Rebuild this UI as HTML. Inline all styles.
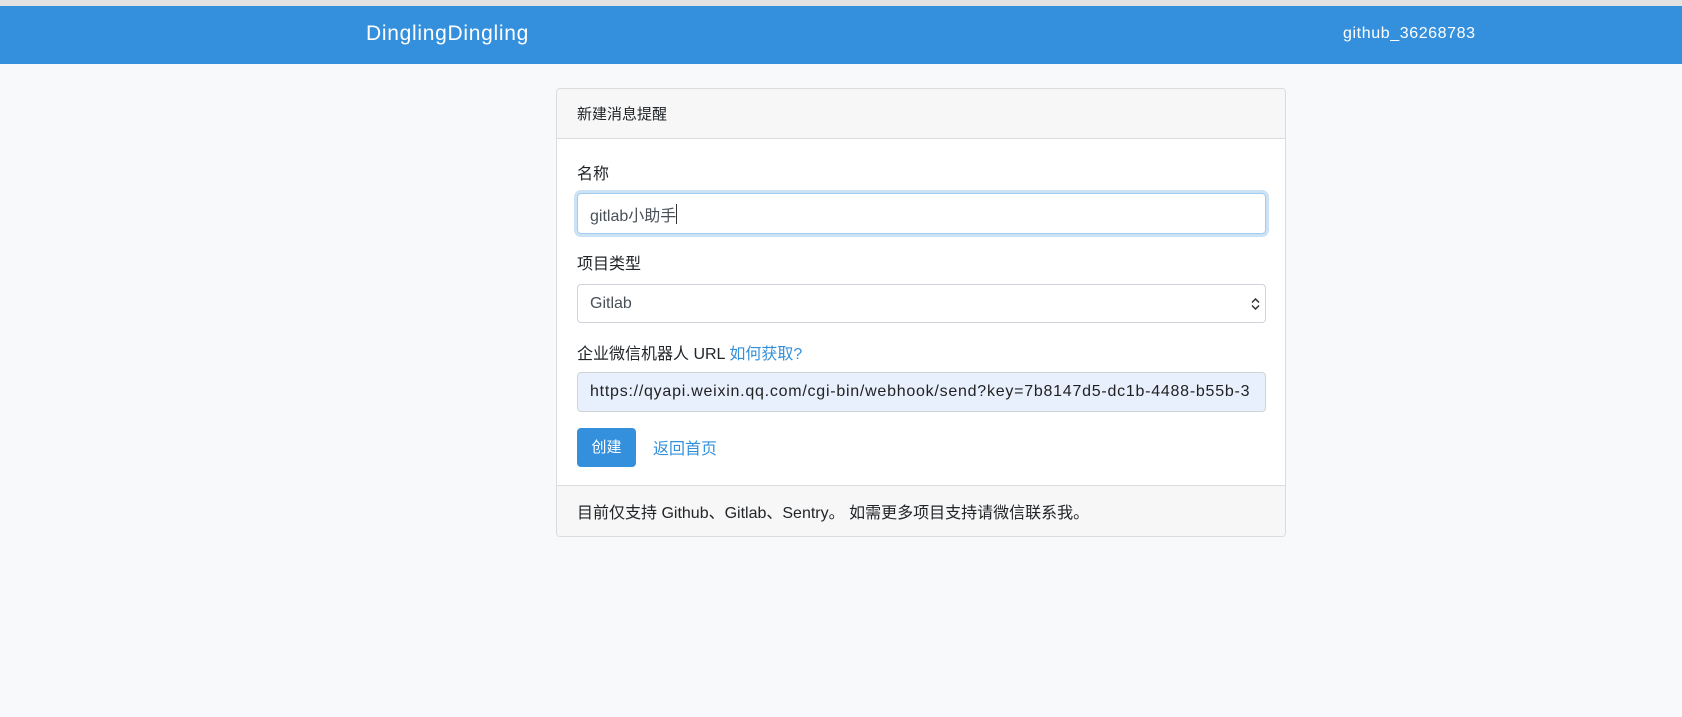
<!DOCTYPE html>
<html><head><meta charset="utf-8"><style>
*{box-sizing:border-box;margin:0;padding:0}
body{width:1682px;height:717px;background:#f8f9fa;font-family:"Liberation Sans","Noto Sans CJK SC",sans-serif;font-size:16px;color:#212529;position:relative;overflow:hidden}
.top{position:absolute;left:0;top:0;width:1682px;height:6px;background:#e2e2e2}
.nav{position:absolute;left:0;top:6px;width:1682px;height:58px;background:#3490dc;color:#fff}
.brand{position:absolute;left:366px;top:16px;font-size:21px;letter-spacing:0.7px}
.user{position:absolute;left:1343px;top:19px;font-size:16px;letter-spacing:0.6px}
.card{position:absolute;left:556px;top:88px;width:730px;height:449px;border:1px solid #dcdcdc;border-radius:4px;background:#fff;overflow:hidden}
.ch{height:50px;background:#f7f7f7;border-bottom:1px solid #dcdcdc;padding:14px 20px;font-size:15px}
.a{position:absolute;left:20px}
.lbl{font-size:16px}
.inp{position:absolute;left:20px;width:689px;border:1px solid #ced4da;border-radius:4px;padding:0 12px;font-size:16px;display:flex;align-items:center;color:#495057}
.foot{position:absolute;left:0;bottom:0;width:100%;height:51px;background:#f7f7f7;border-top:1px solid #dcdcdc;padding:13px 20px;font-size:16px}
</style></head><body>
<div class="top"></div>
<div class="nav"><div class="brand">DinglingDingling</div><div class="user">github_36268783</div></div>
<div class="card">
<div class="ch">新建消息提醒</div>
<div class="a lbl" style="top:71px">名称</div>
<div class="inp" style="top:104px;height:41px;border-color:#a1cbef;box-shadow:0 0 0 3px rgba(52,144,220,.25)">gitlab小助手<span style="display:inline-block;width:1px;height:20px;background:#333"></span></div>
<div class="a lbl" style="top:161px">项目类型</div>
<div class="inp" style="top:195px;height:39px">Gitlab<svg style="position:absolute;right:5px;top:13px" width="9" height="12" viewBox="0 0 9 12"><path d="M1 4.5L4.5 1 8 4.5M1 7.5L4.5 11 8 7.5" fill="none" stroke="#333" stroke-width="1.5"/></svg></div>
<div class="a lbl" style="top:251px">企业微信机器人 URL <span style="color:#3490dc">如何获取?</span></div>
<div class="inp" style="top:283px;height:40px;background:#e8f0fe;white-space:nowrap;overflow:hidden;letter-spacing:0.75px;color:#222">https://qyapi.weixin.qq.com/cgi-bin/webhook/send?key=7b8147d5-dc1b-4488-b55b-3</div>
<div class="a" style="top:339px;width:59px;height:39px;background:#3490dc;border-radius:4px;color:#fff;font-size:15px;text-align:center;line-height:39px">创建</div>
<div class="a" style="left:96px;top:346px;color:#3490dc">返回首页</div>
<div class="foot">目前仅支持 Github、Gitlab、Sentry。 如需更多项目支持请微信联系我。</div>
</div>
</body></html>
